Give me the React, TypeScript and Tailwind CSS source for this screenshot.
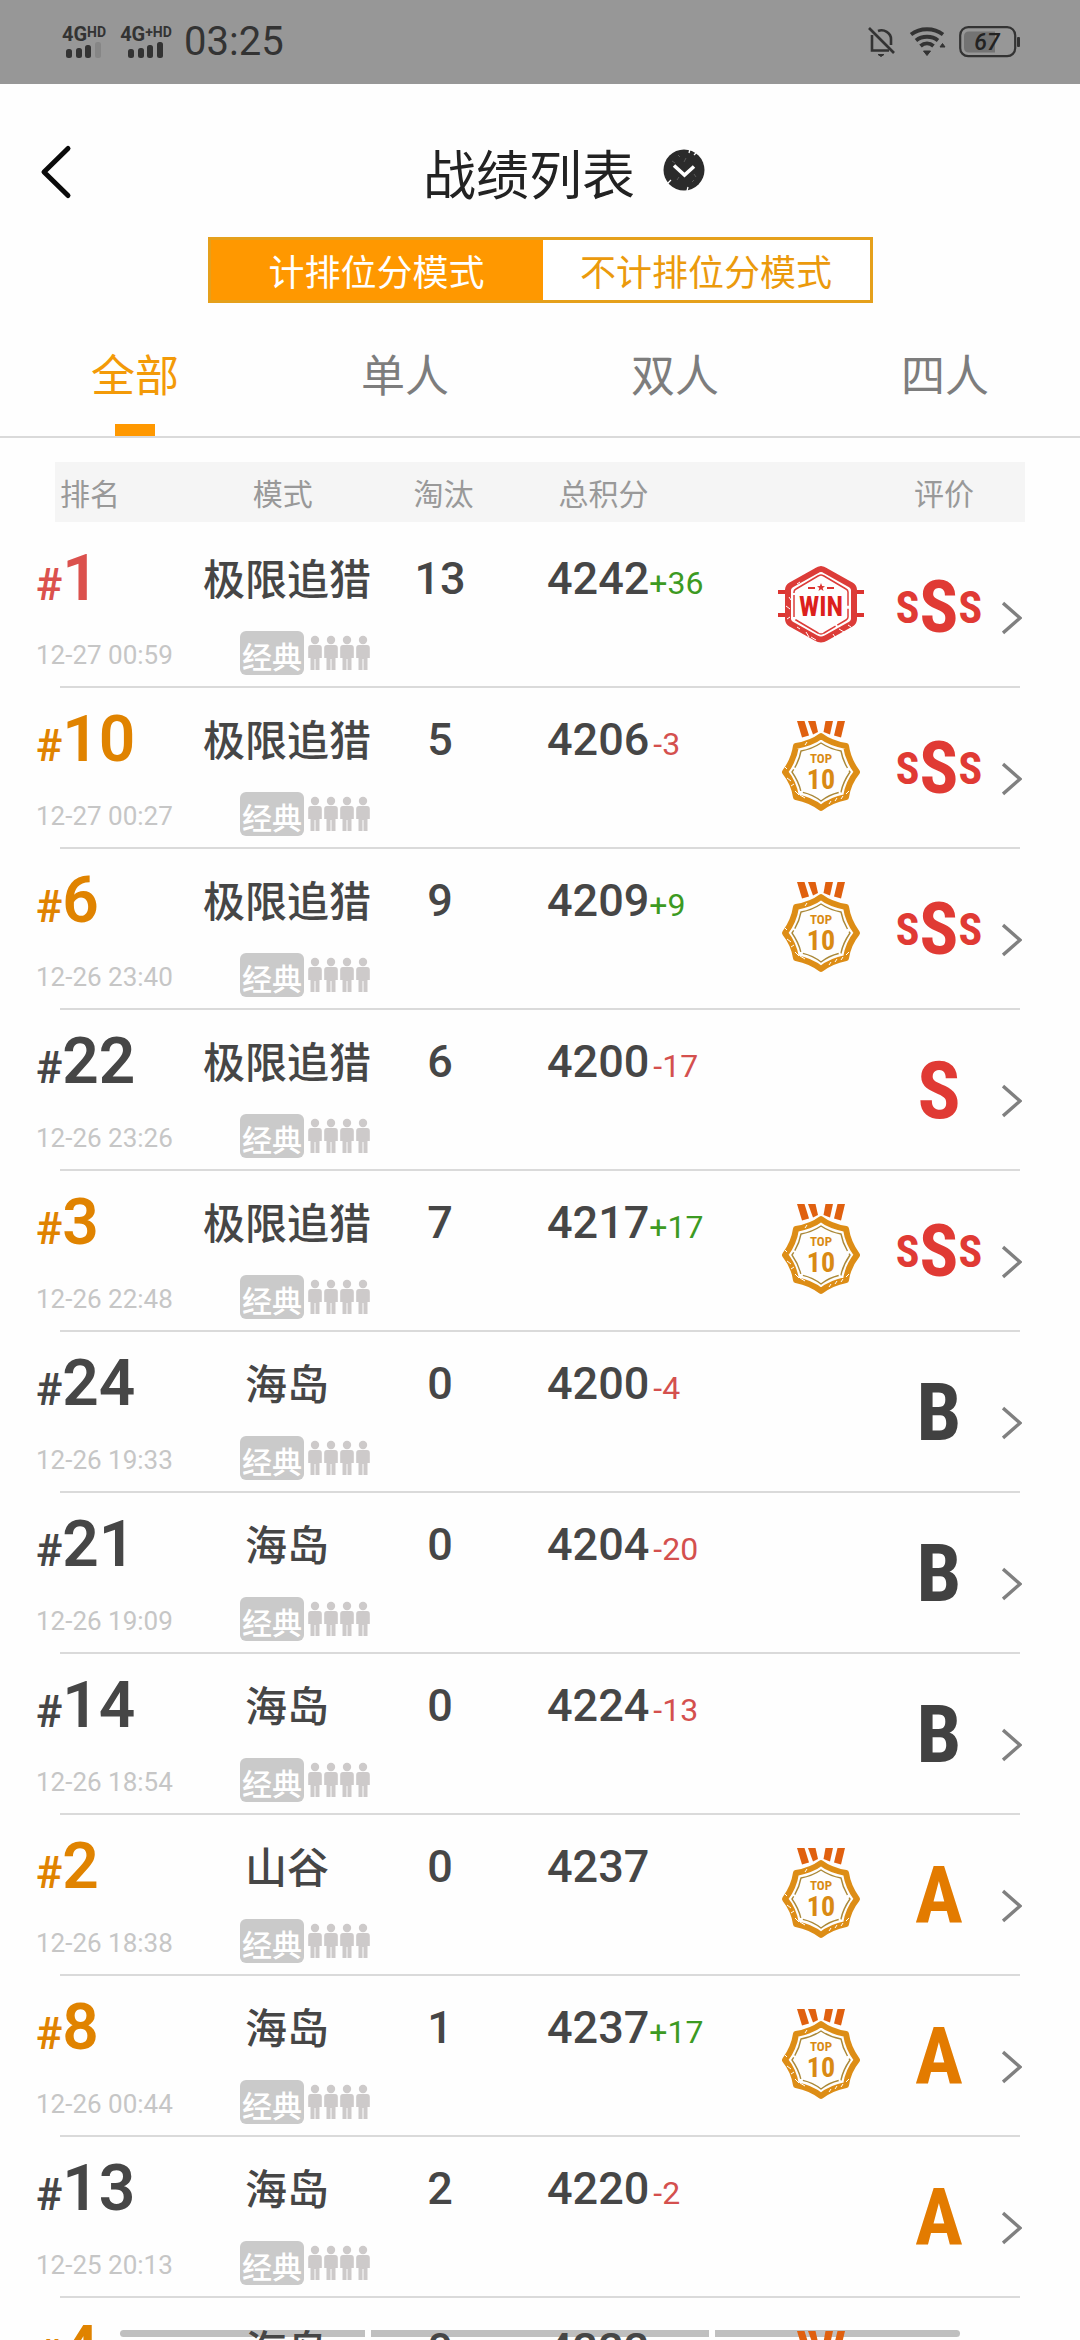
import { useState } from "react";

type Grade = "SSS" | "S" | "A" | "B";
type Medal = "win" | "top10" | null;
type Tone = "red" | "orange" | "dark";

interface RecordItem {
  rank: number;
  tone: Tone;
  date: string;
  mode: string;
  kills: number;
  score: number;
  delta: number;
  medal: Medal;
  grade: Grade;
}

const RECORDS: RecordItem[] = [
  { rank: 1, tone: "red", date: "12-27 00:59", mode: "极限追猎", kills: 13, score: 4242, delta: 36, medal: "win", grade: "SSS" },
  { rank: 10, tone: "orange", date: "12-27 00:27", mode: "极限追猎", kills: 5, score: 4206, delta: -3, medal: "top10", grade: "SSS" },
  { rank: 6, tone: "orange", date: "12-26 23:40", mode: "极限追猎", kills: 9, score: 4209, delta: 9, medal: "top10", grade: "SSS" },
  { rank: 22, tone: "dark", date: "12-26 23:26", mode: "极限追猎", kills: 6, score: 4200, delta: -17, medal: null, grade: "S" },
  { rank: 3, tone: "orange", date: "12-26 22:48", mode: "极限追猎", kills: 7, score: 4217, delta: 17, medal: "top10", grade: "SSS" },
  { rank: 24, tone: "dark", date: "12-26 19:33", mode: "海岛", kills: 0, score: 4200, delta: -4, medal: null, grade: "B" },
  { rank: 21, tone: "dark", date: "12-26 19:09", mode: "海岛", kills: 0, score: 4204, delta: -20, medal: null, grade: "B" },
  { rank: 14, tone: "dark", date: "12-26 18:54", mode: "海岛", kills: 0, score: 4224, delta: -13, medal: null, grade: "B" },
  { rank: 2, tone: "orange", date: "12-26 18:38", mode: "山谷", kills: 0, score: 4237, delta: 0, medal: "top10", grade: "A" },
  { rank: 8, tone: "orange", date: "12-26 00:44", mode: "海岛", kills: 1, score: 4237, delta: 17, medal: "top10", grade: "A" },
  { rank: 13, tone: "dark", date: "12-25 20:13", mode: "海岛", kills: 2, score: 4220, delta: -2, medal: null, grade: "A" },
  { rank: 4, tone: "orange", date: "12-25 19:52", mode: "海岛", kills: 0, score: 4222, delta: 0, medal: "top10", grade: "B" },
];

const TONES: Record<Tone, string> = {
  red: "text-[#db514d]",
  orange: "text-[#e08300]",
  dark: "text-[#464646]",
};

const GRADE_TONES: Record<Grade, string> = {
  SSS: "text-[#e03a34]",
  S: "text-[#e03a34]",
  A: "text-[#e37b00]",
  B: "text-[#414141]",
};

const NARROW = "'Roboto Condensed','Liberation Sans Narrow',sans-serif";

function SignalBars({ faintLast }: { faintLast?: boolean }) {
  return (
    <svg width="36" height="16" viewBox="0 -3 36 16" fill="#333" aria-hidden="true">
      <rect x="0" y="4" width="6" height="9" rx="2.500" />
      <rect x="10" y="3" width="6" height="10" rx="2.500" />
      <rect x="19" y="0" width="6" height="13" rx="2.500" />
      <rect x="29" y="-3" width="6" height="16" rx="2.500" fill={faintLast ? "#868686" : "#333"} />
    </svg>
  );
}

function StatusBar() {
  return (
    <div className="flex h-21 shrink-0 items-center justify-between bg-[#979797] px-15 text-[#333]">
      <div className="flex items-center">
        <div className="flex w-12 flex-col items-center">
          <div className="flex items-start leading-4 font-bold">
            <span className="text-[20px]">4G</span>
            <span className="text-[14px] leading-3">HD</span>
          </div>
          <SignalBars faintLast />
        </div>
        <div className="ml-2 flex w-15 flex-col items-center">
          <div className="flex items-start leading-4 font-bold">
            <span className="text-[20px]">4G</span>
            <span className="text-[14px] leading-3">+HD</span>
          </div>
          <SignalBars />
        </div>
        <time className="ml-2 text-[40px] leading-12">03:25</time>
      </div>
      <div className="flex items-center gap-3">
        <svg width="30" height="32" viewBox="0 0 30 32" fill="none" stroke="#333" strokeWidth="2.600" aria-hidden="true">
          <path d="M2 2 L27 27" />
          <path d="M5 9 V24.500 H22" />
          <path d="M11 5 C17 2.500 24 7 24 13 V19" />
          <path d="M11 28.500 H17 L14 30.500 Z" fill="#333" strokeWidth="1" />
        </svg>
        <svg width="38" height="32" viewBox="0 0 38 32" fill="none" stroke="#333" strokeWidth="3.800" aria-hidden="true">
          <path d="M2 8.500 C11 1.500 25 1.500 34 8.500" />
          <path d="M7 14.500 C13 9.500 23 9.500 29 14.500" />
          <path d="M11.500 20 C15.500 16.500 20.500 16.500 24.500 20" />
          <path d="M14.500 25 H21.500 L18 29.500 Z" fill="#333" strokeWidth="1" />
          <path d="M31 21 L33.500 17.500 L36 21 Z" fill="#333" strokeWidth="1" />
        </svg>
        <svg width="61" height="32" viewBox="0 0 61 32" aria-hidden="true">
          <rect x="1.200" y="1.200" width="55" height="29" rx="8" fill="none" stroke="#333" strokeWidth="2.200" />
          <path d="M10 5.500 H36 V26.500 H10 Q5 26.500 5 21.500 V10.500 Q5 5.500 10 5.500Z" fill="#737373" />
          <rect x="58" y="11" width="3" height="10" rx="1" fill="#333" />
          <text x="28" y="24" textAnchor="middle" fontSize="23" fontStyle="italic" fontWeight="500" fontFamily="Roboto, sans-serif" fill="#222">67</text>
        </svg>
      </div>
    </div>
  );
}

function PersonIcon() {
  return (
    <svg width="14" height="36" viewBox="0 0 14 36" fill="#cdcaca" aria-hidden="true">
      <circle cx="7" cy="5" r="4.200" />
      <path d="M3 10 H11 Q13.800 10 13.800 13 V23 H11.500 V35 H7.500 V24 H6.500 V35 H2.500 V23 H0.200 V13 Q0.200 10 3 10Z" />
    </svg>
  );
}

function WinMedal() {
  return (
    <svg width="96" height="96" viewBox="0 0 96 96" role="img" aria-label="WIN">
      <g fill="#dc3430">
        <rect x="5" y="31" width="9" height="4" />
        <rect x="5" y="54" width="9" height="4" />
        <rect x="82" y="31" width="9" height="4" />
        <rect x="82" y="54" width="9" height="4" />
        <path d="M48 24 L49.100 27 L52 27.200 L49.700 29 L50.500 32 L48 30.300 L45.500 32 L46.300 29 L44 27.200 L46.900 27Z" />
        <rect x="35" y="28" width="7" height="2" />
        <rect x="54" y="28" width="7" height="2" />
      </g>
      <g fill="none" stroke="#dc3c38" strokeLinejoin="round">
        <path d="M48 10 Q50 10 53 12 L78 26 Q81 28 81 31 V60 Q81 63 78 65 L53 79 Q48 82 43 79 L18 65 Q15 63 15 60 V31 Q15 28 18 26 L43 12 Q46 10 48 10Z" strokeWidth="6" />
        <path d="M48 16 Q49 16 51 17 L73 30 Q75 31 75 33 V58 Q75 60 73 61 L51 74 Q48 76 45 74 L23 61 Q21 60 21 58 V33 Q21 31 23 30 L45 17 Q47 16 48 16Z" strokeWidth="1.500" strokeDasharray="46 3 22 2" />
      </g>
      <g stroke="#fff" strokeWidth="1" fill="none">
        <path d="M16 38 L18 41 M13 47 L17 50 M14 60 L17 58 M24 68 L27 70 M33 73 L36 78 M66 70 L71 73 M75 66 L78 68 M60 75 L62 78 M24 25 L27 23 M38 78 L43 81" />
      </g>
      <text x="48" y="57" textAnchor="middle" fontSize="27" fontWeight="700" fontFamily={NARROW} fill="#dc201c">WIN</text>
    </svg>
  );
}

function Top10Medal() {
  return (
    <svg width="96" height="96" viewBox="0 0 96 96" role="img" aria-label="TOP 10">
      <g fill="#e0600f">
        <path d="M24 1 H31.500 L36 15.500 L29 17.500Z" />
        <path d="M35 1 H42.500 L45 12 L40 14.500Z" />
        <path d="M52.500 1 H60 L57 14.500 L50.500 12Z" />
        <path d="M64.500 1 H72 L68 17.500 L61 15.500Z" />
      </g>
      <g fill="none" stroke="#dd8d16" strokeLinejoin="round">
        <path d="M48 16 Q57 23 73 26 Q75 40 84 52 Q75 63 73 77 Q58 80 48 88 Q38 80 23 77 Q21 63 12 52 Q21 40 23 26 Q39 23 48 16Z" strokeWidth="6" />
        <path d="M48 23 Q57 29 68 31 Q70 42 77 52 Q70 62 68 72 Q57 74 48 81 Q39 74 28 72 Q26 62 19 52 Q26 42 28 31 Q39 29 48 23Z" stroke="#aa8838" strokeWidth="1.400" strokeDasharray="40 3 24 2" />
      </g>
      <g stroke="#fff" strokeWidth="1" fill="none">
        <path d="M14 58 L18 61 M18 66 L21 64 M22 71 L26 75 M62 81 L64 78 M68 79 L70 76 M73 74 L76 71 M56 84 L58 81 M12 47 L14 49 M32 25 L34 22 M27 75 L32 78" />
      </g>
      <g fill="#d98a14" fontWeight="700" fontFamily={NARROW} textAnchor="middle">
        <text x="48" y="43" fontSize="13">TOP</text>
        <text x="48" y="69" fontSize="28">10</text>
      </g>
    </svg>
  );
}

function GradeMark({ grade }: { grade: Grade }) {
  return (
    <div
      role="img"
      aria-label={grade}
      className={`flex items-center justify-center font-['Roboto_Condensed','Liberation_Sans_Narrow',sans-serif] leading-none font-bold ${GRADE_TONES[grade]}`}
    >
      {grade === "SSS" ? (
        <>
          <span className="text-[44px]">S</span>
          <span className="text-[72px]">S</span>
          <span className="text-[44px]">S</span>
        </>
      ) : (
        <span className="text-[80px]">{grade}</span>
      )}
    </div>
  );
}

function Delta({ value }: { value: number }) {
  if (value === 0) return null;
  return value > 0 ? (
    <span className="text-[32px] font-normal text-[#3c9a22]">+{value}</span>
  ) : (
    <span className="pl-1 text-[32px] font-normal text-[#d4504e]">-{Math.abs(value)}</span>
  );
}

function RecordRow({ item }: { item: RecordItem }) {
  return (
    <tr className="grid min-h-[161px] grid-cols-[161fr_180fr_126fr_262fr_111fr_126fr_42fr] bg-[linear-gradient(#dadada,#dadada)] bg-[length:calc(100%-120px)_2px] bg-bottom bg-no-repeat px-9 text-[#464646]">
      <td className="pt-5">
        <div className={`flex h-16 items-baseline leading-16 font-semibold ${TONES[item.tone]}`}>
          <span className="text-[44px]">#</span>
          <span className="text-[64px]">{item.rank}</span>
        </div>
        <time className="mt-7 block text-[26px] leading-8 whitespace-nowrap text-[#c6c6c6]">{item.date}</time>
      </td>
      <td className="flex flex-col items-center pt-6 font-['Noto_Sans_CJK_SC',sans-serif]">
        <span className="text-[42px] leading-13 font-medium whitespace-nowrap">{item.mode}</span>
        <div className="mt-7 ml-9 flex items-center gap-1">
          <span className="h-11 rounded-md bg-[#cacaca] px-[2px] text-[30px] leading-12 font-medium whitespace-nowrap text-white">经典</span>
          <span className="flex gap-[2px]" role="img" aria-label="四人">
            <PersonIcon />
            <PersonIcon />
            <PersonIcon />
            <PersonIcon />
          </span>
        </div>
      </td>
      <td className="pt-7 text-center text-[45px] leading-12 font-medium">{item.kills}</td>
      <td className="pt-7 pl-11 text-[45px] leading-12 font-medium whitespace-nowrap">
        {item.score}
        <Delta value={item.delta} />
      </td>
      <td className="flex justify-center pt-8">
        {item.medal === "win" && <WinMedal />}
        {item.medal === "top10" && <Top10Medal />}
      </td>
      <td className="flex items-center justify-center">
        <GradeMark grade={item.grade} />
      </td>
      <td className="flex items-center pt-5">
        <button type="button" aria-label="查看详情">
          <svg width="20" height="34" viewBox="0 0 20 34" fill="none" stroke="#808080" strokeWidth="3.400" aria-hidden="true">
            <path d="M1 2 L18 17 L1 32" />
          </svg>
        </button>
      </td>
    </tr>
  );
}

const TABS = ["全部", "单人", "双人", "四人"];

export default function App() {
  const [ranked, setRanked] = useState(true);
  const [tab, setTab] = useState("全部");

  return (
    <div className="relative flex h-screen flex-col overflow-hidden bg-[#fefefe] font-[Roboto,'Noto_Sans_CJK_SC',sans-serif]">
      <StatusBar />

      <header className="grid shrink-0 grid-cols-[1fr_auto_1fr] items-center px-9 pt-14 pb-[33px]">
        <button type="button" aria-label="返回" className="justify-self-start">
          <svg width="38" height="56" viewBox="0 0 38 56" fill="none" stroke="#0a0a0a" strokeWidth="5" strokeLinecap="round" strokeLinejoin="round" aria-hidden="true">
            <path d="M32 4.500 L8 28 L32 51.500" />
          </svg>
        </button>
        <div className="flex h-16 items-center gap-7 pl-12">
          <h1 className="font-['Noto_Sans_CJK_SC',sans-serif] text-[53px] leading-15 text-[#222]">战绩列表</h1>
          <button type="button" aria-label="展开" className="mb-1">
            <svg width="42" height="42" viewBox="0 0 42 42" fill="none" aria-hidden="true">
              <circle cx="21" cy="21" r="20.500" fill="#2b2b2b" />
              <path d="M11 16.500 L21.500 26 L31 17.500" stroke="#fff" strokeWidth="3.600" />
              <path d="M27 0 L26 4 M33 4 L31 6 M5 34 L8 31 M24 42 L25 38" stroke="#fff" strokeWidth="1.300" />
              <path d="M15 6 L17 8 M21 13 L23 9 M9 12 L12 14 M31 25 L33 28 M14 31 L16 28 M29 33 L31 31" stroke="#5a5a5a" strokeWidth="1" />
            </svg>
          </button>
        </div>
      </header>

      <div className="mx-auto grid w-[665px] max-w-full shrink-0 grid-cols-[332fr_327fr] border-3 border-[#e5a01c] font-['Noto_Sans_CJK_SC',sans-serif] text-[36px] leading-15">
        <button
          type="button"
          aria-pressed={ranked}
          onClick={() => setRanked(true)}
          className={ranked ? "bg-[#ff9800] text-white" : "bg-white text-[#eb9a0c]"}
        >
          计排位分模式
        </button>
        <button
          type="button"
          aria-pressed={!ranked}
          onClick={() => setRanked(false)}
          className={ranked ? "bg-white text-[#eb9a0c]" : "bg-[#ff9800] text-white"}
        >
          不计排位分模式
        </button>
      </div>

      <div role="tablist" className="grid h-[135px] shrink-0 grid-cols-4 border-b-2 border-[#dadada] font-['Noto_Sans_CJK_SC',sans-serif] text-[44px] leading-15">
        {TABS.map((name) => (
          <button
            key={name}
            type="button"
            role="tab"
            aria-selected={tab === name}
            onClick={() => setTab(name)}
            className={`flex flex-col items-center justify-between pt-10 ${tab === name ? "text-[#f39a08]" : "text-[#7d7d7d]"}`}
          >
            {name}
            {tab === name && <span className="h-3 w-10 bg-[#ff9800]" />}
          </button>
        ))}
      </div>

      <div aria-hidden="true" className="absolute inset-x-30 bottom-[3px] flex h-[7px] gap-[6px]">
        <span className="flex-[245] rounded-l-full bg-[#bfbfbf]" />
        <span className="flex-[338] bg-[#bfbfbf]" />
        <span className="flex-[245] rounded-r-full bg-[#bfbfbf]" />
      </div>

      <table className="relative mt-6 block min-h-0 flex-1 overflow-hidden">
        <thead className="mb-[5px] block px-[55px] font-['Noto_Sans_CJK_SC',sans-serif]">
          <tr className="grid grid-cols-[142fr_172fr_150fr_170fr_175fr_162fr] bg-[#f5f5f5] text-[30px] leading-15 text-[#999]">
            <th className="pl-[5px] text-left font-normal">排名</th>
            <th className="font-normal">模式</th>
            <th className="font-normal">淘汰</th>
            <th className="font-normal">总积分</th>
            <th className="col-start-6 font-normal">评价</th>
          </tr>
        </thead>
        <tbody className="block">
          {RECORDS.map((item) => (
            <RecordRow key={item.date} item={item} />
          ))}
        </tbody>
      </table>
    </div>
  );
}
